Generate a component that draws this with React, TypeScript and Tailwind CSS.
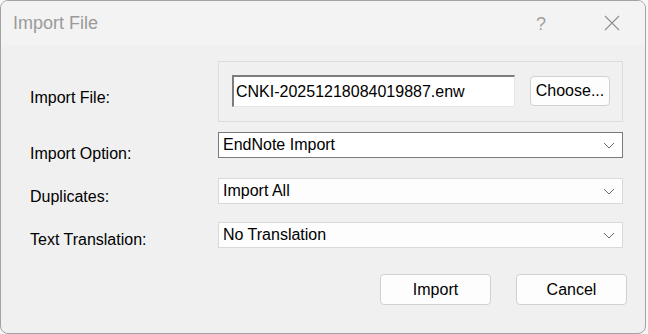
const FONT = "font-['Liberation_Sans',Arial,sans-serif]";

function Chevron() {
  return (
    <svg width="12" height="7" viewBox="0 0 12 7" className="shrink-0">
      <polyline points="1,1 6,6 11,1" fill="none" stroke="#6b6b6b" strokeWidth="1" />
    </svg>
  );
}

type SelectProps = { value: string; focused?: boolean };

function Select({ value, focused }: SelectProps) {
  return (
    <div
      className={
        focused
          ? "flex h-[26px] items-center justify-between border border-[#7a7a7a] bg-white pl-[4px] pr-[7px]"
          : "flex h-[26px] items-center justify-between border border-[#d9d9d9] bg-[#fdfdfd] pl-[4px] pr-[7px]"
      }
    >
      <span className="text-[16px] leading-[16px] text-black">{value}</span>
      <Chevron />
    </div>
  );
}

export default function App() {
  return (
    <div className={`h-[334px] w-[648px] bg-[#f7f7f7] ${FONT}`}>
      <div className="flex h-[334px] w-[646px] flex-col overflow-hidden rounded-[8px] border border-[#a3a3a3] bg-[#f0f0f0]">
        {/* title bar */}
        <div className="flex h-[44px] shrink-0 items-center bg-[#f3f3f3] pl-[12px]">
          <span className="text-[18px] leading-[18px] text-[#9a9a9a]">Import File</span>
          <span className="ml-auto mt-[2px] text-[18px] leading-[18px] text-[#a0a0a0]">?</span>
          <svg width="16" height="16" viewBox="0 0 16 16" className="ml-[58px] mr-[25px]">
            <path d="M1 1 L15 15 M15 1 L1 15" stroke="#8f8f8f" strokeWidth="1.1" fill="none" />
          </svg>
        </div>

        {/* body */}
        <div className="flex flex-col pl-[29px] pr-[22px] pt-[16px]">
          <div className="flex">
            <div className="w-[188px] pt-[29px] text-[16px] leading-[16px] text-black">Import File:</div>
            <div className="flex h-[61px] flex-1 items-center border border-[#dcdcdc] pl-[13px] pr-[12px]">
              <div className="mb-[2px] h-[32px] w-[283px] border-l-2 border-t-2 border-b border-r border-l-[#7d7d7d] border-t-[#7d7d7d] border-b-[#e6e6e6] border-r-[#e6e6e6] bg-white pl-[2px] pt-[3px]">
                <span className="text-[16px] leading-[16px] text-black">CNKI-20251218084019887.enw</span>
              </div>
              <button className="mb-[1px] ml-auto flex h-[30px] w-[80px] items-center justify-center rounded-[4px] border border-[#d0d0d0] bg-[#fdfdfd] text-[16px] leading-[16px] text-black">
                Choose...
              </button>
            </div>
          </div>

          <div className="mt-[10px] flex h-[26px]">
            <div className="w-[188px] shrink-0 pt-[14px] text-[16px] leading-[16px] text-black">Import Option:</div>
            <div className="flex-1">
              <Select value="EndNote Import" focused />
            </div>
          </div>

          <div className="mt-[20px] flex h-[26px]">
            <div className="w-[188px] shrink-0 pt-[11px] text-[16px] leading-[16px] text-black">Duplicates:</div>
            <div className="flex-1">
              <Select value="Import All" />
            </div>
          </div>

          <div className="mt-[18px] flex h-[26px]">
            <div className="w-[188px] shrink-0 pt-[10px] text-[16px] leading-[16px] text-black">Text Translation:</div>
            <div className="flex-1">
              <Select value="No Translation" />
            </div>
          </div>

          <div className="-mr-[4px] mt-[26px] flex justify-end gap-[25px]">
            <button className="flex h-[31px] w-[111px] items-center justify-center rounded-[4px] border border-[#d0d0d0] bg-[#fdfdfd] text-[16px] leading-[16px] text-black">
              Import
            </button>
            <button className="flex h-[31px] w-[111px] items-center justify-center rounded-[4px] border border-[#d0d0d0] bg-[#fdfdfd] text-[16px] leading-[16px] text-black">
              Cancel
            </button>
          </div>
        </div>
      </div>
    </div>
  );
}
